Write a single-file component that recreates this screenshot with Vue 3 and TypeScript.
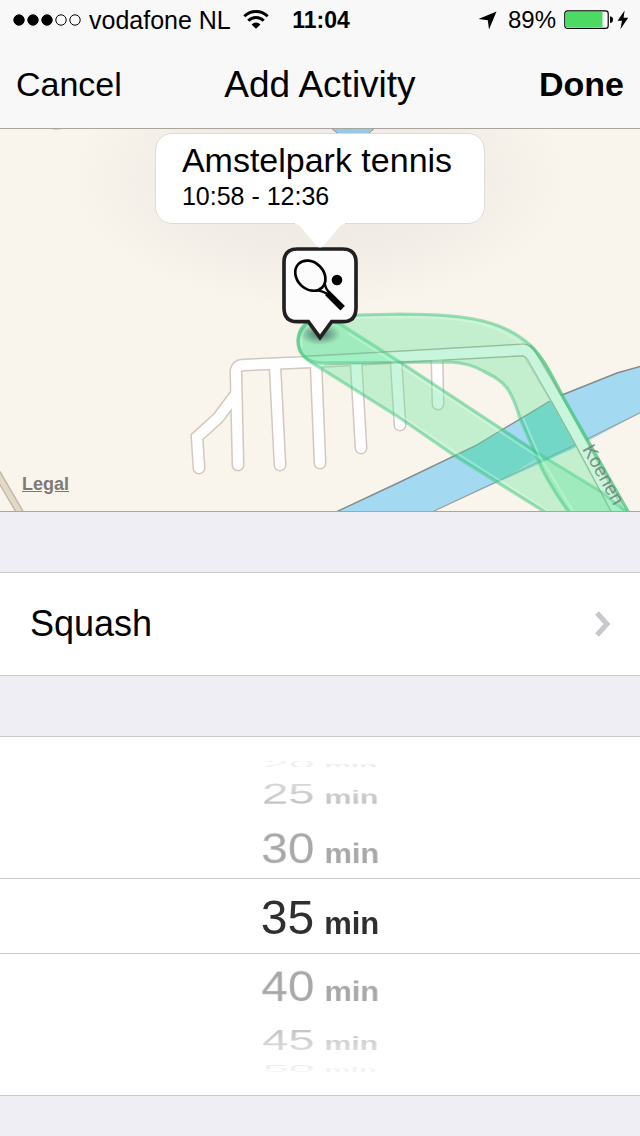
<script setup lang="ts">
import { computed, ref } from 'vue'

const signalStrength = 3
const batteryLevel = 89
const activity = ref('Squash')
const durations = [20, 25, 30, 35, 40, 45, 50]
const selected = ref(35)

const STEP_DEGREES = 25

// Each duration sits on a face of the picker drum, one step apart.
const faces = computed(() => {
  const current = durations.indexOf(selected.value)
  return durations.map((minutes, index) => ({
    minutes,
    angle: (current - index) * STEP_DEGREES,
  }))
})
</script>

<template>
  <div class="screen">
    <header class="top">
      <div class="status">
        <div class="status-left">
          <svg class="dots" width="68" height="12" viewBox="0 0 68 12" aria-hidden="true">
            <circle
              v-for="n in 5"
              :key="n"
              :cx="6 + (n - 1) * 14"
              cy="6"
              r="5.2"
              :fill="n <= signalStrength ? '#000' : 'none'"
              stroke="#000"
              stroke-width="1"
            />
          </svg>
          <span>vodafone NL</span>
          <svg class="wifi" width="26" height="20" viewBox="0 0 26 20" aria-hidden="true">
            <path d="M1.3 6.3A16.6 16.6 0 0 1 24.7 6.3" fill="none" stroke="#000" stroke-width="2.8" />
            <path d="M5.3 10.7A10.9 10.9 0 0 1 20.7 10.7" fill="none" stroke="#000" stroke-width="2.8" />
            <path d="M8.6 14.4A6.2 6.2 0 0 1 17.4 14.4L13 18.8Z" fill="#000" />
          </svg>
        </div>
        <time class="clock">11:04</time>
        <div class="status-right">
          <svg class="arrow" width="19" height="19" viewBox="0 0 19 19" aria-hidden="true">
            <path d="M18.5 .5L11 18.5L9.8 9.2L.5 8Z" fill="#000" />
          </svg>
          <span>{{ batteryLevel }}%</span>
          <svg class="battery" width="50" height="20" viewBox="0 0 50 20" aria-hidden="true">
            <rect x=".8" y=".8" width="43.4" height="17.6" rx="2.6" fill="#fff" stroke="#000" stroke-width="1.2" />
            <rect x="2" y="2" width="36.5" height="15.2" rx="1" fill="#4cd964" />
            <path d="M46 6.3Q49 6.8 49 9.7Q49 12.6 46 13.1Z" fill="#000" />
          </svg>
          <svg class="bolt" width="12" height="20" viewBox="0 0 12 20" aria-hidden="true">
            <path d="M7.6 .5L.6 10.8H5L3.4 19.3L11.2 7.8H6.6Z" fill="#000" />
          </svg>
        </div>
      </div>
      <nav class="nav">
        <button type="button" class="nav-button">Cancel</button>
        <h1 class="title">Add Activity</h1>
        <button type="button" class="nav-button done">Done</button>
      </nav>
    </header>

    <main>
      <section class="map" aria-label="Map">
        <svg class="map-art" viewBox="0 129 640 382" preserveAspectRatio="xMidYMid slice" aria-hidden="true">
          <defs>
            <radialGradient id="shade" cx="320" cy="178" r="1" gradientUnits="userSpaceOnUse" gradientTransform="translate(320 178) scale(250 130) translate(-320 -178)">
              <stop offset="0" stop-color="#5a5260" stop-opacity=".08" />
              <stop offset=".6" stop-color="#5a5260" stop-opacity=".045" />
              <stop offset="1" stop-color="#5a5260" stop-opacity="0" />
            </radialGradient>
            <radialGradient id="tip">
              <stop offset="0" stop-color="#123" stop-opacity=".6" />
              <stop offset="1" stop-color="#123" stop-opacity="0" />
            </radialGradient>
          </defs>
          <rect y="129" width="640" height="382" fill="#f9f4ec" />
          <path d="M331 128L342 137H364L375 128Z" fill="#97d2ec" stroke="#8f9698" />
          <path d="M336 512L400 482L475 446L550 401L562 395L617 373L642 366V412L577 447L432 512Z" fill="#a3daf2" />
          <path d="M336 512L400 482L475 446L550 401L562 395L617 373L642 366" fill="none" stroke="#858a8b" stroke-width="1.4" />
          <path d="M642 412L577 444L432 512" fill="none" stroke="#9b9c98" stroke-width="1.1" />
          <path d="M-3 473L22 516" fill="none" stroke="#c3b9a8" stroke-width="8" />
          <path d="M-3 473L22 516" fill="none" stroke="#e2dac6" stroke-width="5" />
          <path d="M45 128Q56 130 68 128" fill="none" stroke="#a79c8f" />

          <g fill="none" stroke-linecap="round" stroke-linejoin="round">
            <g stroke="#d3c8bd" stroke-width="13">
              <path d="M238 465L236 374Q235 365 244 365L312 362L400 357L523 350Q528 350 531 356L557 400L582 445L622 520" />
              <path d="M199 468L197 437L218 418L236 394" stroke-linejoin="miter" />
              <path d="M280 465L275 366M320 463L316 364M361 448L356 361M400 425L396 360M438 404L437 358" />
            </g>
            <g stroke="#fff" stroke-width="10">
              <path d="M238 465L236 374Q235 365 244 365L312 362L400 357L523 350Q528 350 531 356L557 400L582 445L622 520" />
              <path d="M199 468L197 437L218 418L236 394" stroke-linejoin="miter" />
              <path d="M280 465L275 366M320 463L316 364M361 448L356 361M400 425L396 360M438 404L437 358" />
            </g>
          </g>

          <g fill="#5fe59a" fill-opacity=".35" stroke="#45c680" stroke-opacity=".5" stroke-width="3.2">
            <path d="M630 515L603 493L541 455L400 362L340 324C318 312 299 321 298 341C298 353 306 360 317 366L400 418L455 456L550 515Z" />
            <path d="M630 515L600 462L562 395C553 378 544 358 530 345C517 333 503 326 483 321C460 315 430 314 400 314L357 315L325 317C307 319 298 329 298 341C298 354 307 363 323 363L450 362C465 363 475 366 483 371C493 376 501 380 507 388C514 398 516 406 520 418L536 455C542 471 552 489 571 515Z" />
          </g>
          <g fill="#20c0a0" fill-opacity=".22">
            <path d="M455 456L475 446L505 430L541 455L499 482Z" />
            <path d="M520 419L552 401L577 446L541 463L536 455Z" />
          </g>
          <g fill="none" stroke="#e6fff1" stroke-opacity=".32" stroke-width="2">
            <path d="M302 347C299 334 308 321 324 320L357 318L400 317C440 317 462 319 482 324C502 330 515 337 526 348" />
            <path d="M348 333L400 366L540 458" />
            <path d="M400 415L455 452L548 511" />
            <path d="M523 418L539 455L573 511" />
          </g>
          <path d="M530 345C544 358 553 378 562 395L630 515" fill="none" stroke="#31c274" stroke-opacity=".4" stroke-width="3" />
          <g fill="none" stroke="#7c9a80" stroke-opacity=".45">
            <path d="M305 356L400 351L523 344Q531 344 536 352L562 395" />
            <path d="M324 365L400 362L523 356L527 358L552 402L578 449L612 513" />
          </g>
          <text class="street" transform="translate(582 449) rotate(61)">Koenen</text>
          <rect y="129" width="640" height="200" fill="url(#shade)" />
          <ellipse cx="320" cy="334" rx="21" ry="11" fill="url(#tip)" />
        </svg>

        <div class="overlay">
          <div class="callout">
            <strong class="place">Amstelpark tennis</strong>
            <span class="hours">10:58 - 12:36</span>
          </div>
          <svg class="tail" width="54" height="26" viewBox="0 0 54 26" aria-hidden="true">
            <path d="M2 0H52V1C48 1 46 4 42 9L32 21Q27 28 22 21L12 9C8 4 6 1 2 1Z" fill="#fff" />
          </svg>
          <svg class="pin" width="76" height="94" viewBox="66 50 228 282" aria-hidden="true">
            <path
              d="M112 56H248Q288 56 288 96V232Q288 274 248 274H215L180 322L145 274H112Q72 274 72 232V96Q72 56 112 56Z"
              fill="#fcfcfc"
              stroke="#231f20"
              stroke-width="11"
            />
            <ellipse cx="151" cy="136" rx="50" ry="40" transform="rotate(45 151 136)" fill="none" stroke="#000" stroke-width="8" />
            <path d="M194 157Q195 175 211 190M171 180Q188 181 207 194" fill="none" stroke="#000" stroke-width="7" />
            <path d="M202 188L248 234" stroke="#000" stroke-width="19" />
            <circle cx="231" cy="149" r="16" fill="#000" />
          </svg>
        </div>
        <a class="legal" href="#legal">Legal</a>
      </section>

      <button type="button" class="row">
        <span>{{ activity }}</span>
        <svg width="18" height="26" viewBox="0 0 18 26" aria-hidden="true">
          <path d="M3 2L13 13L3 24" fill="none" stroke="#c7c7cc" stroke-width="5" />
        </svg>
      </button>

      <fieldset class="picker" aria-label="Duration">
        <div class="band"></div>
        <div class="drum">
          <label
            v-for="face in faces"
            :key="face.minutes"
            class="face"
            :class="{ active: face.angle === 0 }"
            :style="{ '--angle': face.angle + 'deg' }"
          >
            <input v-model="selected" type="radio" name="duration" :value="face.minutes" />
            <span class="number">{{ face.minutes }}</span>
            <span class="unit">min</span>
          </label>
        </div>
        <div class="fade"></div>
      </fieldset>
    </main>
  </div>
</template>

<style>
body {
  background: #efeef4;
}
</style>

<style scoped>
.screen {
  min-height: 100vh;
  background: #efeef4;
  color: #000;
  font-family: 'Liberation Sans', Arial, sans-serif;
}

button {
  border: 0;
  background: none;
  color: inherit;
  font: inherit;
  cursor: pointer;
}

.top {
  background: #f8f8f8;
  border-bottom: 1px solid #aaa49e;
}

.status {
  display: grid;
  grid-template-columns: 1fr auto 1fr;
  align-items: center;
  height: 40px;
  padding: 0 11px 0 13px;
  font-size: 24px;
  line-height: 28px;
}

.status-left,
.status-right {
  display: flex;
  align-items: center;
}

.status-left {
  font-size: 25px;
}

.status-right {
  justify-content: flex-end;
}

.dots {
  margin-right: 8px;
}

.wifi {
  margin-left: 12px;
}

.clock {
  font-size: 23px;
  font-weight: 700;
}

.arrow {
  margin-right: 11px;
}

.battery {
  margin: 0 3px 0 8px;
}

.nav {
  display: grid;
  grid-template-columns: 1fr auto 1fr;
  align-items: center;
  height: 88px;
  padding: 0 16px;
}

.nav-button {
  justify-self: start;
  padding: 0;
  font-size: 34px;
  line-height: 40px;
}

.done {
  justify-self: end;
  font-weight: 700;
}

.title {
  margin: 0;
  padding-top: 2px;
  font-size: 37px;
  font-weight: 400;
  line-height: 40px;
}

.map {
  position: relative;
  overflow: hidden;
  border-bottom: 1px solid #a8a6a0;
}

.map-art {
  display: block;
  width: 100%;
  aspect-ratio: 640 / 382;
}

.street {
  fill: #6d7f73;
  fill-opacity: 0.85;
  font-size: 19px;
}

.overlay {
  position: absolute;
  inset: 0;
  display: flex;
  flex-direction: column;
  align-items: center;
  padding-top: 4px;
}

.callout {
  display: flex;
  flex-direction: column;
  padding: 7px 32px 10px 26px;
  border: 1px solid #dfdad2;
  border-radius: 17px;
  background: #fff;
}

.place {
  font-size: 34px;
  font-weight: 400;
  line-height: 38px;
}

.hours {
  font-size: 25px;
  line-height: 34px;
}

.tail {
  z-index: 1;
  margin-top: -1px;
}

.pin {
  margin-top: -2px;
}

.legal {
  position: absolute;
  bottom: 17px;
  left: 22px;
  color: #7d7a76;
  font-size: 18px;
  font-weight: 700;
  line-height: 20px;
}

.row {
  display: flex;
  align-items: center;
  justify-content: space-between;
  width: 100%;
  height: 104px;
  margin: 60px 0;
  padding: 0 28px 0 30px;
  border-top: 1px solid #c8c7cc;
  border-bottom: 1px solid #c8c7cc;
  background: #fff;
  font-size: 36px;
}

.picker {
  display: grid;
  grid-template-rows: 358px;
  align-items: center;
  margin: 0;
  padding: 0;
  border: 0;
  border-top: 1px solid #c8c7cc;
  border-bottom: 1px solid #c8c7cc;
  background: #fff;
  overflow: hidden;
}

.band,
.drum,
.fade {
  grid-area: 1 / 1;
}

.band {
  height: 74px;
  border-top: 1px solid #c8c7cc;
  border-bottom: 1px solid #c8c7cc;
}

.drum {
  display: grid;
  justify-items: center;
  perspective: 3000px;
}

.face {
  grid-area: 1 / 1;
  display: flex;
  align-items: baseline;
  gap: 10px;
  padding-top: 10px;
  color: #a8a8a8;
  line-height: 56px;
  backface-visibility: hidden;
  cursor: pointer;
  /* Turns the face round the drum's axis, 164px behind the glass. */
  transform: translateZ(-164px) rotateX(var(--angle)) translateZ(164px);
}

.face.active {
  color: #2f2f2f;
}

.face input {
  position: absolute;
  margin: 0;
  opacity: 0;
}

.number {
  font-size: 48px;
}

.unit {
  font-size: 31px;
  font-weight: 700;
}

.fade {
  position: relative;
  align-self: stretch;
  background: linear-gradient(
    #fff 16px,
    rgba(255, 255, 255, 0.75) 32px,
    rgba(255, 255, 255, 0) 92px,
    rgba(255, 255, 255, 0) 266px,
    rgba(255, 255, 255, 0.75) 326px,
    #fff 342px
  );
  pointer-events: none;
}
</style>
